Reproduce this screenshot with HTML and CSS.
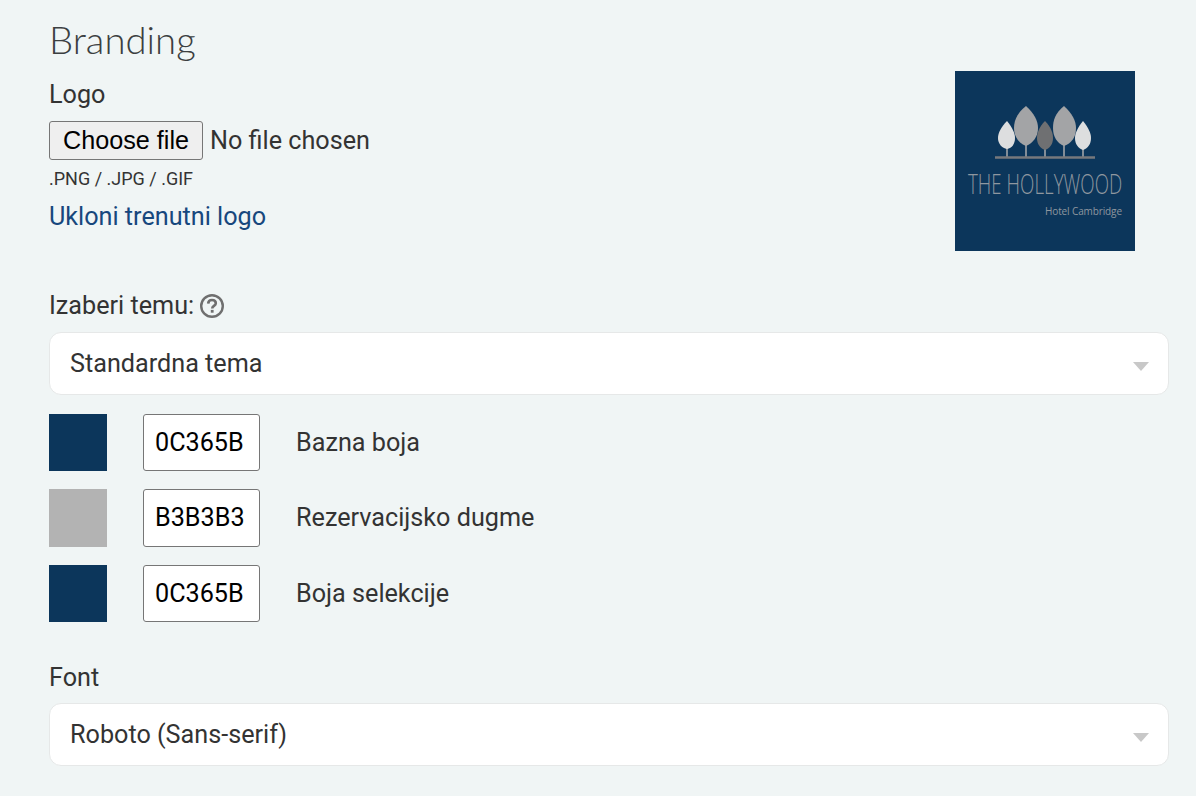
FILE: index.html
```html
<!DOCTYPE html>
<html>
<head>
    <title>Branding</title>
    <link rel="stylesheet" href="styles.css">
</head>
<body>
    <h1 class="title">Branding</h1>
    <div class="logo-row">
        <div class="logo-fields">
            <div class="label">Logo</div>
            <div class="file-input">
                <button class="file-button" type="button">Choose file</button>
                <span class="file-name">No file chosen</span>
            </div>
            <div class="hint">.PNG / .JPG / .GIF</div>
            <a class="remove-link" href="#">Ukloni trenutni logo</a>
        </div>
        <svg class="logo-preview" width="180" height="180" viewBox="0 0 180 180">
            <rect width="180" height="180" fill="#0c365b"/>
            <path d="M52 86V75M71 86V70M90 86V76M109 86V70M128 86V76" stroke="#a9abad" stroke-width="1.5" fill="none"/>
            <path d="M40 86.5H140" stroke="#77797c" stroke-width="2.5" fill="none"/>
            <path d="M52 50C46 56 43 62 43 67C43 73 47 77 52 78C57 77 60 73 60 67C60 62 57 56 52 50Z" fill="#dddedf"/>
            <path d="M71 35C62 42 59 50 59 57C59 66 64 72 71 75C78 72 83 66 83 57C83 50 79 42 71 35Z" fill="#a3a4a6"/>
            <path d="M90 50C84 56 82 62 82 67C82 73 85 77 90 79C95 77 98 73 98 67C98 62 96 56 90 50Z" fill="#6f7072"/>
            <path d="M109 35C100 42 98 50 98 57C98 66 102 72 109 75C117 72 121 66 121 57C121 50 117 42 109 35Z" fill="#a3a4a6"/>
            <path d="M128 50C123 56 120 62 120 67C120 73 123 77 128 79C133 77 136 73 136 67C136 62 133 56 128 50Z" fill="#dddedf"/>
            <text class="logo-name" transform="translate(13 123) scale(0.695 1)">THE HOLLYWOOD</text>
            <text class="logo-sub" x="90" y="144" textLength="77">Hotel Cambridge</text>
        </svg>
    </div>

    <div class="label theme-label">
        Izaberi temu:
        <svg class="help-icon" width="24" height="24" viewBox="0 0 24 24">
            <circle cx="12" cy="12" r="10.8" fill="none" stroke="#6f6f6f" stroke-width="2.4"/>
            <path d="M8.2 9.6C8.3 7.2 10 6 12 6C14.3 6 15.8 7.4 15.8 9.2C15.8 11.8 12.2 11.9 12.2 14.4" fill="none" stroke="#6f6f6f" stroke-width="2.6"/>
            <rect x="10.8" y="15.9" width="2.8" height="2.8" fill="#6f6f6f"/>
        </svg>
    </div>
    <div class="select-wrap">
        <select class="select">
            <option>Standardna tema</option>
        </select>
    </div>

    <div class="colors">
        <div class="color-row">
            <span class="swatch swatch-blue"></span>
            <input class="hex" type="text" value="0C365B">
            <span class="color-name">Bazna boja</span>
        </div>
        <div class="color-row">
            <span class="swatch swatch-grey"></span>
            <input class="hex" type="text" value="B3B3B3">
            <span class="color-name">Rezervacijsko dugme</span>
        </div>
        <div class="color-row">
            <span class="swatch swatch-blue"></span>
            <input class="hex" type="text" value="0C365B">
            <span class="color-name">Boja selekcije</span>
        </div>
    </div>

    <div class="label font-label">Font</div>
    <div class="select-wrap">
        <select class="select">
            <option>Roboto (Sans-serif)</option>
        </select>
    </div>
</body>
</html>
```

FILE: styles.css
```css
html, body {
    height: 100%;
}
body {
    margin: 0;
    padding: 0 27px 0 49px;
    box-sizing: border-box;
    background-color: #f0f5f5;
    color: #333;
    font-family: Roboto, sans-serif;
    font-size: 25.2px;
    overflow: hidden;
}
.title {
    margin: 0;
    padding-top: 16px;
    font-family: Lato, sans-serif;
    font-weight: 300;
    font-size: 38.3px;
    line-height: 46px;
    color: #3c3f41;
}
.logo-row {
    display: flex;
    justify-content: space-between;
    padding-right: 34px;
    margin-top: 9px;
}
.label {
    line-height: 28px;
}
.logo-fields {
    padding-top: 10px;
}
.file-input {
    display: flex;
    align-items: center;
    gap: 7px;
    margin-top: 12px;
}
.file-button {
    height: 39px;
    width: 154px;
    padding: 0;
    box-sizing: border-box;
    background-color: #efefef;
    border: 1px solid #767676;
    border-radius: 3px;
    font-family: "Liberation Sans", sans-serif;
    font-size: 25.2px;
    color: #000;
}
.hint {
    margin-top: 9px;
    font-size: 18px;
    line-height: 20px;
}
.remove-link {
    display: block;
    margin-top: 14px;
    line-height: 28px;
    color: #17477d;
    text-decoration: none;
}
.logo-preview {
    display: block;
}
.logo-name {
    font-family: "Open Sans", sans-serif;
    font-weight: 300;
    font-size: 27px;
    fill: #8f979f;
}
.logo-sub {
    font-family: "Open Sans", sans-serif;
    font-size: 10px;
    fill: #8f979f;
}
.theme-label {
    display: flex;
    align-items: center;
    gap: 6px;
    margin-top: 41px;
    margin-bottom: 12px;
}
.help-icon {
    display: block;
}
.select-wrap {
    position: relative;
}
.select-wrap::after {
    content: "";
    position: absolute;
    right: 20px;
    top: 30px;
    border-left: 8.5px solid transparent;
    border-right: 8.5px solid transparent;
    border-top: 9px solid #c8c8c8;
}
.select {
    display: block;
    width: 100%;
    height: 63px;
    padding: 0 20px;
    appearance: none;
    background-color: #fff;
    border: 1px solid #e6e8e8;
    border-radius: 12px;
    font-family: Roboto, sans-serif;
    font-size: 25.2px;
    color: #333;
}
.colors {
    display: flex;
    flex-direction: column;
    gap: 18px;
    margin-top: 18.5px;
}
.color-row {
    display: flex;
    align-items: center;
}
.swatch {
    width: 58px;
    height: 57.6px;
    margin-right: 36px;
}
.swatch-blue {
    background-color: #0c365b;
}
.swatch-grey {
    background-color: #b3b3b3;
}
.hex {
    width: 117px;
    height: 57.6px;
    box-sizing: border-box;
    padding: 0 0 0 11px;
    background-color: #fff;
    border: 1px solid #767676;
    border-radius: 3px;
    font-family: Roboto, sans-serif;
    font-size: 25.2px;
    color: #000;
    margin-right: 36px;
}
.font-label {
    margin-top: 42px;
    margin-bottom: 11px;
}
```
